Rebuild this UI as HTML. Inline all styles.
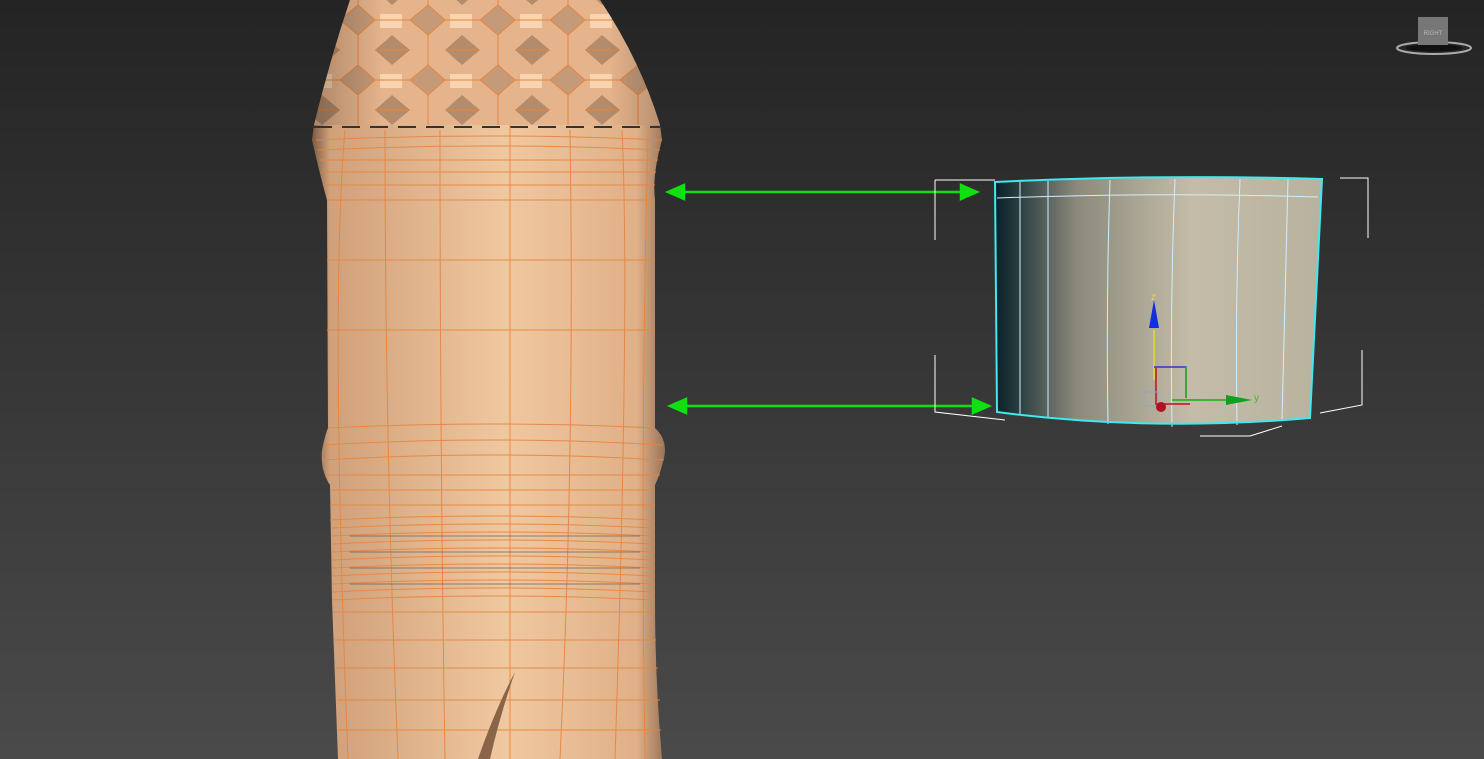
<!DOCTYPE html>
<html><head><meta charset="utf-8"><style>
html,body{margin:0;padding:0;width:1484px;height:759px;overflow:hidden;background:#333}
svg{display:block}
</style></head><body>
<svg width="1484" height="759" viewBox="0 0 1484 759" xmlns="http://www.w3.org/2000/svg">
<defs>
<linearGradient id="bg" x1="0" y1="0" x2="0" y2="1">
<stop offset="0" stop-color="#242424"/><stop offset="1" stop-color="#4a4a4a"/></linearGradient>
<linearGradient id="bot" x1="0" y1="0" x2="1" y2="0">
<stop offset="0" stop-color="#7a5a42"/><stop offset="0.05" stop-color="#d0a07a"/>
<stop offset="0.55" stop-color="#f0c8a0"/><stop offset="0.92" stop-color="#e0b088"/><stop offset="1" stop-color="#9a7458"/></linearGradient>
<pattern id="hex" width="70" height="60" patternUnits="userSpaceOnUse" x="340" y="-10">
<rect width="70" height="60" fill="#e6b48c"/>
<polygon points="0,30 18,15 35,30 18,45" fill="#c49a78"/>
<polygon points="35,0 52,-15 70,0 52,15" fill="#b48c6c"/>
<polygon points="35,60 52,45 70,60 52,75" fill="#b48c6c"/>
<rect x="40" y="24" width="22" height="14" fill="#f8d4b0"/>
<path d="M0 30L18 15L35 30L18 45Z M35 0L70 0 M35 60L70 60 M18 15L18 0 M18 45L18 60 M35 30L70 30" stroke="#e8843c" stroke-width="1" fill="none"/>
</pattern>
<linearGradient id="capsh" x1="0" y1="0" x2="1" y2="0">
<stop offset="0" stop-color="#000" stop-opacity="0.25"/><stop offset="0.2" stop-color="#000" stop-opacity="0"/>
<stop offset="0.85" stop-color="#000" stop-opacity="0"/><stop offset="1" stop-color="#000" stop-opacity="0.2"/></linearGradient>
<linearGradient id="cyl" x1="0" y1="0" x2="1" y2="0">
<stop offset="0" stop-color="#0a2028"/><stop offset="0.05" stop-color="#1e3438"/>
<stop offset="0.25" stop-color="#8c8a7c"/><stop offset="0.6" stop-color="#c4bca8"/><stop offset="1" stop-color="#b8b29e"/></linearGradient>
</defs>
<rect width="1484" height="759" fill="url(#bg)"/>
<path d="M350,0 L600,0 Q640,60 660,125 L662,140 Q652,175 655,200 L655,428 Q668,440 664,458 Q660,475 655,485 L655,600 Q655,680 662,759 L338,759 Q335,680 332,600 L330,485 Q320,470 322,450 Q325,435 328,428 L327,200 Q320,175 312,140 L314,125 Q330,60 350,0 Z" fill="url(#bot)"/>
<path d="M350,0 L600,0 Q640,60 660,125 L314,125 Q330,60 350,0 Z" fill="url(#hex)"/>
<path d="M350,0 L600,0 Q640,60 660,125 L314,125 Q330,60 350,0 Z" fill="url(#capsh)"/>
<path d="M314,127 L660,127" stroke="#333" stroke-width="2" stroke-dasharray="18 10"/>
<g stroke="#e8843c" stroke-width="1" fill="none" opacity="0.9">
<path d="M316,140 Q490,132 662,140 M318,150 Q490,142 660,150 M320,160 H658 M322,172 H656 M325,185 H655 M327,200 H655 M327,260 H655 M327,330 H655 M328,428 Q490,420 655,428 M324,445 Q490,435 663,445 M322,460 Q490,450 664,460 M326,475 H660 M330,490 H655 M330,505 H655"/>
<path d="M330,520 Q490,512 655,520 M332,528 Q490,520 655,528 M332,536 Q490,528 655,536 M332,544 Q490,536 655,544 M332,552 Q490,544 655,552 M332,560 Q490,552 655,560 M332,568 Q490,560 655,568 M332,576 Q490,568 655,576 M332,584 Q490,576 655,584 M332,592 Q490,584 655,592 M332,600 Q490,592 655,600 M333,612 H655 M334,640 H656 M336,668 H658 M337,700 H660 M338,730 H661"/>
<path d="M345,130 Q330,300 348,759 M385,130 Q385,450 398,759 M440,130 Q440,450 445,759 M510,125 V759 M570,130 Q575,450 560,759 M622,130 Q630,300 615,759 M648,135 Q640,450 645,759"/>
</g>
<g stroke="#555" stroke-width="1.2" opacity="0.5"><path d="M350,536 H640 M350,552 H640 M350,568 H640 M350,584 H640"/></g>
<path d="M515,672 Q495,710 478,759 L490,759 Q500,715 515,672Z" fill="#8a6446"/>
<g stroke="#10e010" stroke-width="2.5" fill="#10e010">
<line x1="680" y1="192" x2="965" y2="192"/><polygon points="668,192 684,185 684,199"/><polygon points="977,192 961,185 961,199"/>
<line x1="682" y1="406" x2="977" y2="406"/><polygon points="670,406 686,399 686,413"/><polygon points="989,406 973,399 973,413"/>
</g>
<path d="M995,182 Q1160,174 1322,179 L1310,418 Q1150,432 997,412 Z" fill="url(#cyl)"/>
<g stroke="#cfefff" stroke-width="1" fill="none">
<path d="M997,198 Q1160,192 1318,197 M1020,182 V414 M1048,181 V418 M1110,180 Q1106,300 1108,424 M1175,179 Q1170,300 1172,427 M1240,179 Q1235,300 1237,425 M1288,179 Q1285,300 1282,420"/>
</g>
<path d="M995,182 Q1160,174 1322,179 L1310,418 Q1150,432 997,412 Z" stroke="#40e8f0" stroke-width="2" fill="none"/>
<g stroke="#fff" stroke-width="1" fill="none">
<path d="M935,180 V240 M935,180 H995 M1340,178 H1368 V238 M1362,350 V405 L1320,413 M935,355 V412 L1005,420 M1250,436 L1282,426 M1200,436 H1250"/>
</g>
<line x1="1154" y1="330" x2="1154" y2="380" stroke="#e0e020" stroke-width="1.5"/>
<polygon points="1154,300 1149,328 1159,328" fill="#1030e0"/>
<text x="1151" y="300" font-family="Liberation Sans,sans-serif" font-size="10" fill="#e0e020">z</text>
<path d="M1154,367 H1186 V398" stroke="#1020c0" stroke-width="1.2" fill="none"/>
<path d="M1186,367 V398" stroke="#10b010" stroke-width="1.5"/>
<path d="M1156,368 V404 H1190" stroke="#c01020" stroke-width="1.5" fill="none"/>
<line x1="1172" y1="400" x2="1230" y2="400" stroke="#10b010" stroke-width="1.5"/>
<polygon points="1226,395 1252,400 1226,405" fill="#10a020"/>
<text x="1254" y="401" font-family="Liberation Sans,sans-serif" font-size="10" fill="#30c030">y</text>
<rect x="1144" y="392" width="14" height="14" fill="none" stroke="#90a8b8"/>
<circle cx="1161" cy="407" r="5" fill="#b01020"/>
<ellipse cx="1434" cy="48" rx="37" ry="6" fill="none" stroke="#aaa" stroke-width="2"/>
<ellipse cx="1434" cy="48" rx="28" ry="3.5" fill="#111"/>
<rect x="1418" y="17" width="30" height="28" fill="#777"/>
<text x="1433" y="35" text-anchor="middle" font-family="Liberation Sans,sans-serif" font-size="6" fill="#bbb">RIGHT</text>
</svg>
</body></html>
